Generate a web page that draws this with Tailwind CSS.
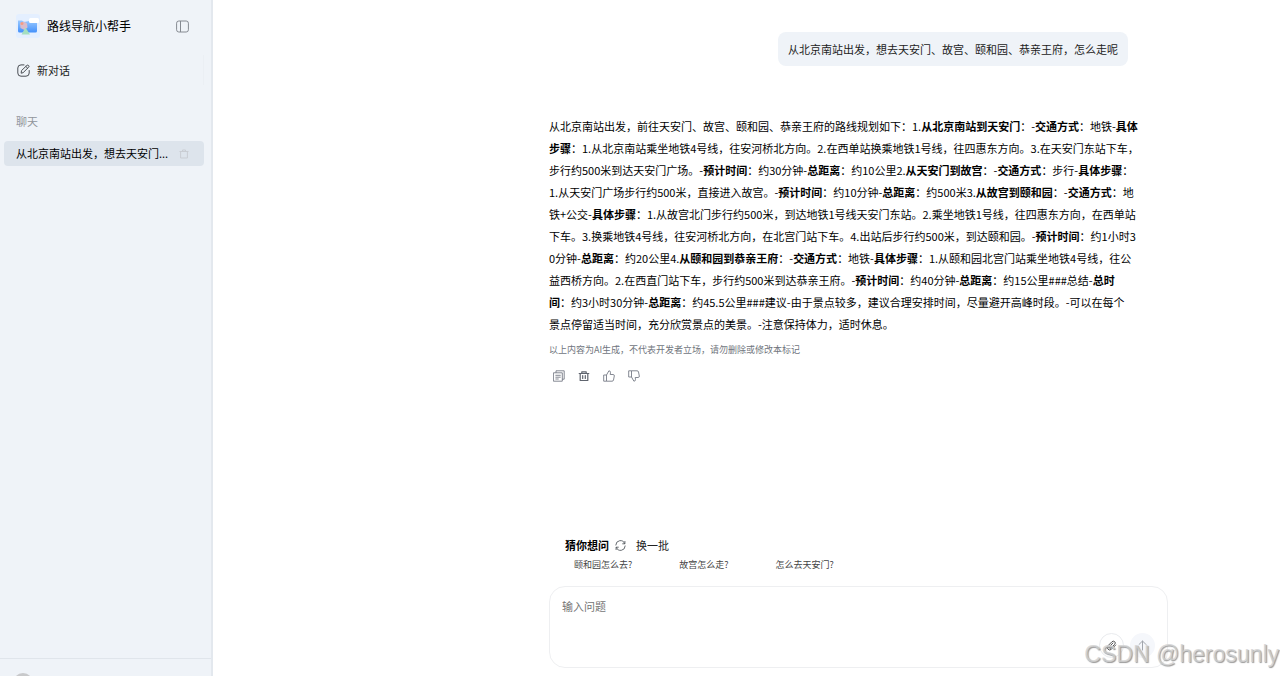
<!DOCTYPE html>
<html lang="zh-CN">
<head>
<meta charset="utf-8">
<meta name="viewport" content="width=device-width, initial-scale=1">
<title>路线导航小帮手</title>
<script src="https://cdn.jsdelivr.net/npm/@tailwindcss/browser@4"></script>
</head>
<body class="flex h-screen overflow-hidden bg-white font-['Noto_Sans_CJK_SC','Liberation_Sans',sans-serif] text-[11px] leading-4 text-[#222]">
  <aside class="flex w-[213px] shrink-0 flex-col border-r-2 border-[#e3e8ee] bg-[#eff3f8]">
    <header class="flex items-center pt-[14px] pr-[22px] pl-4">
      <svg class="size-6 shrink-0" viewBox="0 0 24 24" aria-hidden="true">
        <defs>
          <linearGradient id="screen" x1="0" y1="0" x2="0" y2="1"><stop offset="0" stop-color="#99c9ff"/><stop offset="1" stop-color="#4390fb"/></linearGradient>
        </defs>
        <rect width="24" height="24" rx="3" fill="#e4efff"/>
        <path d="M2 6.500h4l2 1.500 5-1 8 .5V17q0 1.500-1.500 1.500h-16Q2 18.500 2 17z" fill="url(#screen)"/>
        <path d="M4 9l4-1.500 3 2 .5 4-3 2.500-4-2z" fill="#d9bccb"/>
        <circle cx="6" cy="9.500" r="1.500" fill="#f59b83"/>
        <path d="M9.500 13.500L14 20.500H5.500z" fill="#a4dfc0"/>
        <rect x="13" y="4" width="10" height="5" rx="1.500" fill="#fff"/>
      </svg>
      <h1 class="ml-[7px] flex-1 text-[12px] text-black">路线导航小帮手</h1>
      <button type="button" aria-label="收起侧栏" class="text-[#858a91]">
        <svg class="size-[13px]" viewBox="0 0 13 13" fill="none" stroke="currentColor"><rect x=".6" y="1" width="11.800" height="11" rx="2.200"/><path d="M4.500 1v11"/></svg>
      </button>
    </header>
    <div class="mt-[17px] mr-[7px] flex h-[30px] items-center border-r border-[#ebeff4] pl-[17px]">
      <button type="button" class="flex items-center gap-[7px] text-[#222]">
        <svg class="size-[13px]" viewBox="0 0 13 13" fill="none" stroke="#4a4e54" stroke-linecap="round" stroke-linejoin="round"><path d="M7 .9H4Q.8 .9 .8 4v5q0 3.200 3.200 3.200h5q3.200 0 3.200-3.200V6.500"/><path d="M4.200 8.800l.3-2.200 5.400-5.200q.9-.7 1.700.1.900.9.100 1.700L6.400 8.400zM8.900 2.500l1.700 1.700"/></svg>
        <span>新对话</span>
      </button>
    </div>
    <h2 class="mt-[28px] pl-4 text-[#91959b]">聊天</h2>
    <nav class="mt-3 mr-[7px] ml-1 flex h-[25px] items-center rounded bg-[#dde4ec] pr-[15px] pl-3" aria-label="聊天">
      <a href="#" class="flex-1 pb-px whitespace-nowrap text-black">从北京南站出发，想去天安门...</a>
      <button type="button" aria-label="删除对话" class="text-[#c9cdd3]">
        <svg class="size-[10px]" viewBox="0 0 10 10" fill="none" stroke="currentColor"><path d="M.5 2.500h9M3.500 2.500v-1.500h3v1.500M1.600 2.500v6.500h6.800v-6.500"/></svg>
      </button>
    </nav>
    <footer class="mt-auto h-[18px] overflow-hidden border-t border-[#e0e5eb] pt-[14px] pl-[13px]">
      <div class="size-5 rounded-full bg-[#c8c9cb]"></div>
    </footer>
  </aside>

  <main class="flex min-w-0 flex-1 flex-col pr-28 pl-84">
    <section class="flex-1" aria-label="对话">
      <p class="mt-8 mr-10 ml-auto w-fit rounded-lg bg-[#eff3f8] px-[10px] py-[9px] whitespace-nowrap">从北京南站出发，想去天安门、故宫、颐和园、恭亲王府，怎么走呢</p>
      <p class="mt-[49px] leading-[22px] whitespace-nowrap text-black">
        从北京南站出发，前往天安门、故宫、颐和园、恭亲王府的路线规划如下：1.<b>从北京南站到天安门</b>：-<b>交通方式</b>：地铁-<b>具体</b><br>
        <b>步骤</b>：1.从北京南站乘坐地铁4号线，往安河桥北方向。2.在西单站换乘地铁1号线，往四惠东方向。3.在天安门东站下车，<br>
        步行约500米到达天安门广场。-<b>预计时间</b>：约30分钟-<b>总距离</b>：约10公里2.<b>从天安门到故宫</b>：-<b>交通方式</b>：步行-<b>具体步骤</b>：<br>
        1.从天安门广场步行约500米，直接进入故宫。-<b>预计时间</b>：约10分钟-<b>总距离</b>：约500米3.<b>从故宫到颐和园</b>：-<b>交通方式</b>：地<br>
        铁+公交-<b>具体步骤</b>：1.从故宫北门步行约500米，到达地铁1号线天安门东站。2.乘坐地铁1号线，往四惠东方向，在西单站<br>
        下车。3.换乘地铁4号线，往安河桥北方向，在北宫门站下车。4.出站后步行约500米，到达颐和园。-<b>预计时间</b>：约1小时3<br>
        0分钟-<b>总距离</b>：约20公里4.<b>从颐和园到恭亲王府</b>：-<b>交通方式</b>：地铁-<b>具体步骤</b>：1.从颐和园北宫门站乘坐地铁4号线，往公<br>
        益西桥方向。2.在西直门站下车，步行约500米到达恭亲王府。-<b>预计时间</b>：约40分钟-<b>总距离</b>：约15公里###总结-<b>总时</b><br>
        <b>间</b>：约3小时30分钟-<b>总距离</b>：约45.5公里###建议-由于景点较多，建议合理安排时间，尽量避开高峰时段。-可以在每个<br>
        景点停留适当时间，充分欣赏景点的美景。-注意保持体力，适时休息。
      </p>
      <p class="mt-[7px] text-[9px] text-[#70757d]">以上内容为AI生成，不代表开发者立场，请勿删除或修改本标记</p>
      <div class="mt-3 ml-1 flex gap-[13px] text-[#777c87]">
        <button type="button" aria-label="复制"><svg class="size-3" viewBox="0 0 12 12" fill="none" stroke="currentColor" stroke-linecap="round" stroke-linejoin="round"><path d="M3 2.500V.8h8.200v8.400H9.500M.8 2.800h8.500v8.400H.8zM2.800 5.300h4.500M2.800 7.200h4.500M2.800 9h2.500" stroke-width=".9"/></svg></button>
        <button type="button" aria-label="删除"><svg class="size-3" viewBox="0 0 12 12" fill="none" stroke="#5f646e" stroke-linecap="round" stroke-linejoin="round"><path d="M1.200 3.500h9.600M3.800 3.300V1.800h4.400v1.500M2.200 3.500v7h7.600v-7M4.700 5.500v3M7.300 5.500v3" stroke-width="1.200"/></svg></button>
        <button type="button" aria-label="赞"><svg class="size-3" viewBox="0 0 12 12" fill="none" stroke="currentColor" stroke-linejoin="round"><path d="M3.500 5L5.900.8q1.800.1 1.600 1.900L7.200 4.500h3q1.300.1 1.100 1.500l-.8 4q-.2 1.200-1.400 1.200H3.500zM3.500 5H.7v6.200h2.800" stroke-width=".9"/></svg></button>
        <button type="button" aria-label="踩"><svg class="size-3" viewBox="0 0 12 12" fill="none" stroke="currentColor" stroke-linejoin="round"><path d="M3.500 7l2.400 4.200q1.800-.1 1.600-1.900L7.200 7.500h3q1.300-.1 1.100-1.500l-.8-4Q10.300.8 9.100.8H3.500zM3.500 7H.7V.8h2.800" stroke-width=".9"/></svg></button>
      </div>
    </section>

    <section class="mb-[13px] pl-4" aria-labelledby="suggest">
      <div class="flex h-4 items-center">
        <h2 id="suggest" class="font-bold text-black">猜你想问</h2>
        <button type="button" class="ml-[6px] flex items-center gap-[10px]">
          <svg class="size-[11px]" viewBox="0 0 11 11" fill="none" stroke="#555a60" stroke-linecap="round" stroke-linejoin="round" stroke-width=".9"><path d="M.8 5A4.600 4.600 0 0 1 9.700 3.600M9.900 1.400v2.400H7.700M10.200 6A4.600 4.600 0 0 1 1.300 7.400M1.100 9.600V7.200h2.200"/></svg>
          <span>换一批</span>
        </button>
      </div>
      <div class="mt-1 flex gap-[47px] pl-[9px] text-[9px] text-[#444]">
        <button type="button">颐和园怎么去?</button>
        <button type="button">故宫怎么走?</button>
        <button type="button">怎么去天安门?</button>
      </div>
    </section>

    <form class="mb-2 flex h-[82px] flex-col rounded-2xl border border-[#eeeff1] bg-white pt-[11px] pr-3 pb-[9px] pl-3">
      <textarea aria-label="输入问题" placeholder="输入问题" class="min-h-0 flex-1 resize-none outline-none placeholder:text-[#757575]"></textarea>
      <div class="flex justify-end gap-[6px]">
        <button type="button" aria-label="添加附件" class="grid size-[25px] place-items-center rounded-full border border-[#e9ebee] text-[#555]">
          <svg class="size-[11px]" viewBox="0 0 11 11" fill="none" stroke="currentColor" stroke-linecap="round" stroke-linejoin="round"><path d="M9.700 5L5.500 9.200Q3.700 10.900 2 9.200T2 5.700L5.900 1.800Q7.400.5 8.700 1.700T8.700 4.300L5 8Q4.100 8.700 3.400 8T3.400 6.500L7 3"/></svg>
        </button>
        <button type="submit" aria-label="发送" class="grid size-[25px] place-items-center rounded-full bg-[#f5f7fb] text-[#a1a5ac]">
          <svg class="size-[11px]" viewBox="0 0 11 11" fill="none" stroke="currentColor" stroke-linecap="round" stroke-linejoin="round"><path d="M5.500 10V1M2 4.500L5.500 1 9 4.500"/></svg>
        </button>
      </div>
    </form>
  </main>
  <div class="pointer-events-none absolute right-px bottom-2 font-['Liberation_Sans',sans-serif] text-[23px] leading-7 whitespace-nowrap text-[#d2d2d2]/80 [text-shadow:1px_1px_1px_#999]">CSDN @herosunly</div>
</body>
</html>
